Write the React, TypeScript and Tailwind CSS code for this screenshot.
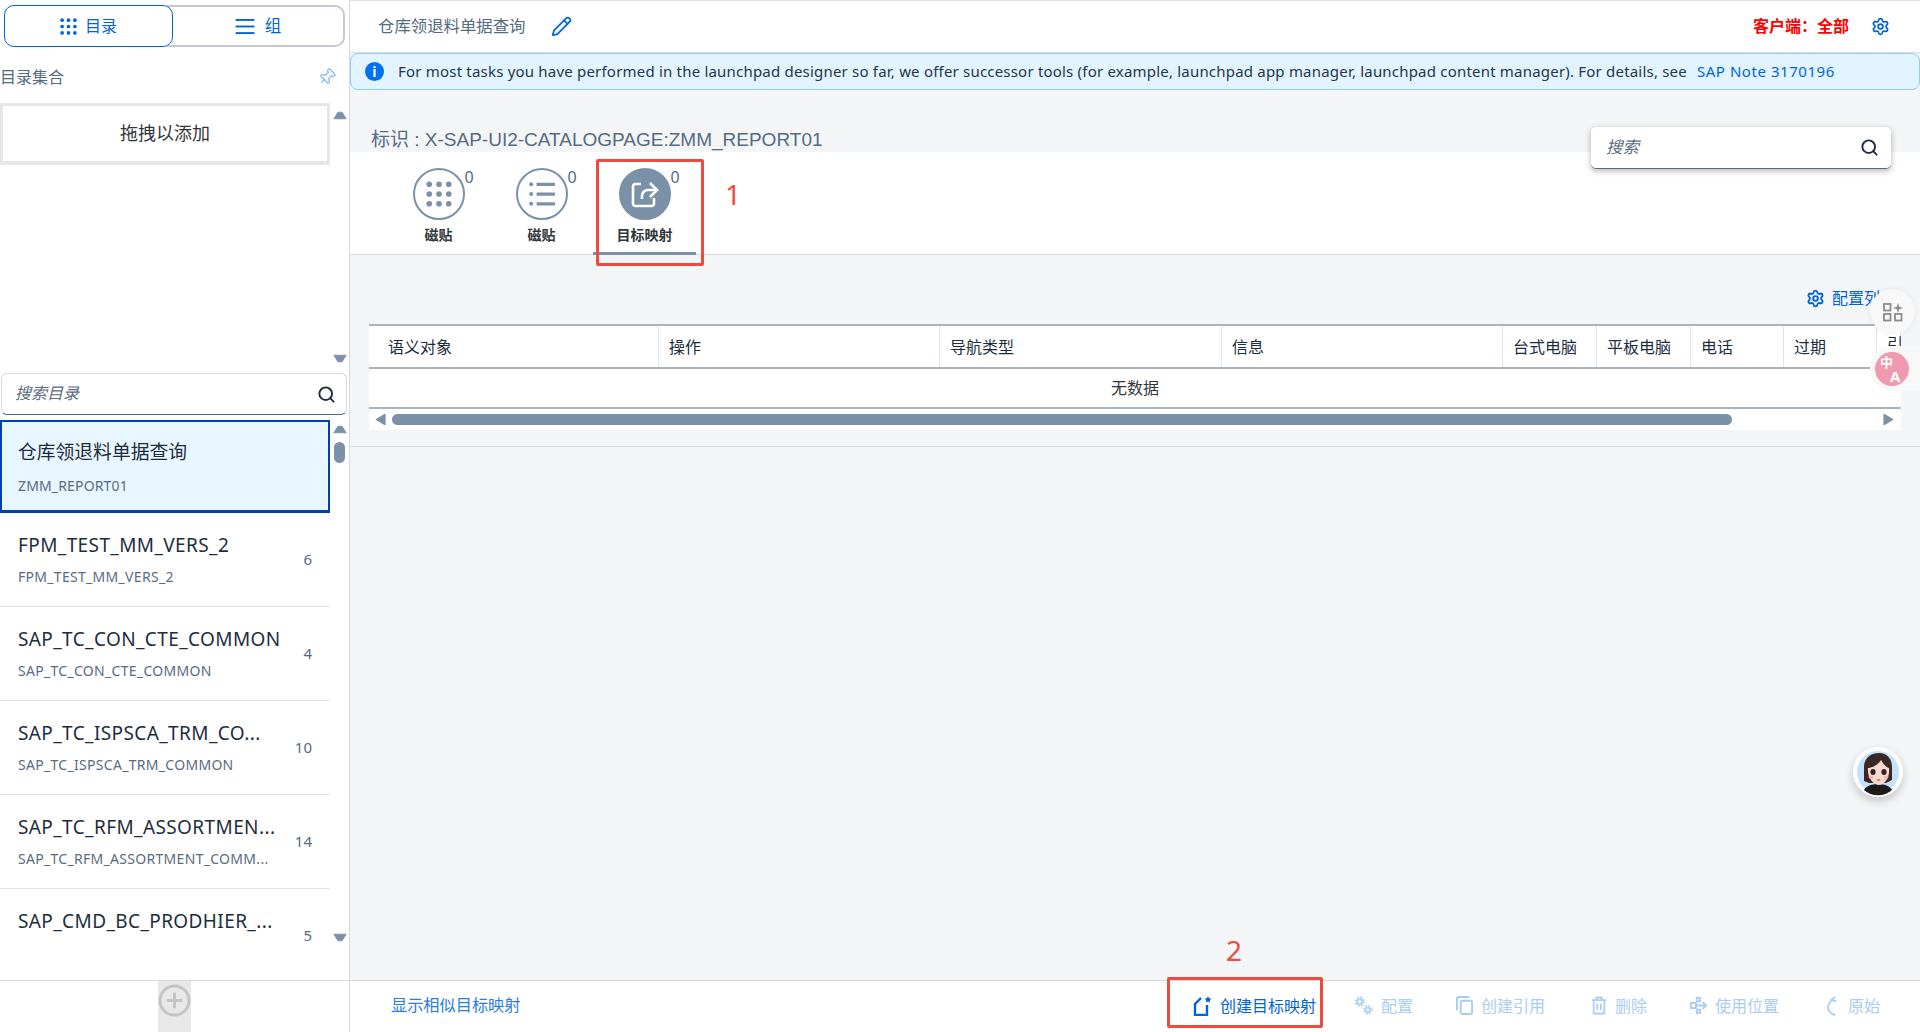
import React from 'react';
import { Pencil, Pin, Search, Settings } from 'lucide-react';

const catalogs = [
  { title: 'FPM_TEST_MM_VERS_2', sub: 'FPM_TEST_MM_VERS_2', count: 6 },
  { title: 'SAP_TC_CON_CTE_COMMON', sub: 'SAP_TC_CON_CTE_COMMON', count: 4 },
  { title: 'SAP_TC_ISPSCA_TRM_CO...', sub: 'SAP_TC_ISPSCA_TRM_COMMON', count: 10 },
  { title: 'SAP_TC_RFM_ASSORTMEN...', sub: 'SAP_TC_RFM_ASSORTMENT_COMM...', count: 14 },
  { title: 'SAP_CMD_BC_PRODHIER_...', sub: '', count: 5 },
];

const columns = ['语义对象', '操作', '导航类型', '信息', '台式电脑', '平板电脑', '电话', '过期', '引'];

const Triangle = ({ dir, className = '' }: { dir: 'up' | 'down' | 'left' | 'right'; className?: string }) => {
  const points = {
    up: '1,9 6,1 11,1 16,9',
    down: '1,1 16,1 11,9 6,9',
    left: '11,0 11,12 1,6',
    right: '1,0 1,12 11,6',
  }[dir];
  const box = dir === 'up' || dir === 'down' ? '0 0 17 10' : '0 0 12 12';
  return (
    <svg viewBox={box} className={className}>
      <polygon points={points} fill="#7b91a8" stroke="#7b91a8" strokeLinejoin="round" />
    </svg>
  );
};

const DotsIcon = ({ className = '', color = '#7b91a8' }: { className?: string; color?: string }) => (
  <svg viewBox="0 0 24 24" className={className} fill={color}>
    {[3, 12, 21].map((y) =>
      [3, 12, 21].map((x) => <circle key={`${x}-${y}`} cx={x} cy={y} r="2.6" />)
    )}
  </svg>
);

const ListIcon = ({ className = '', color = '#7b91a8' }: { className?: string; color?: string }) => (
  <svg viewBox="0 0 24 24" className={className} fill={color}>
    {[3, 12, 21].map((y) => (
      <React.Fragment key={y}>
        <circle cx="2" cy={y} r="1.8" />
        <rect x="7" y={y - 1.5} width="17" height="3" rx="0.5" />
      </React.Fragment>
    ))}
  </svg>
);

const MappingIcon = () => (
  <svg viewBox="0 0 28 28" className="w-[28px] h-[28px]" fill="none" stroke="#fff" strokeWidth="2.6">
    <path d="M10 4H4.5A2.5 2.5 0 0 0 2 6.5v17A2.5 2.5 0 0 0 4.5 26h16a2.5 2.5 0 0 0 2.5-2.5V18" />
    <path d="M11 19v-3a6 6 0 0 1 6-6h8" />
    <path d="M19 3l7 7-7 7" />
  </svg>
);

const CircleTab = ({ label, active, children }: { label: string; active?: boolean; children: React.ReactNode }) => (
  <div className={`w-[103px] h-[103px] pt-[16px] flex flex-col items-center border-b-[3px] ${active ? 'border-[#7b91a8]' : 'border-transparent'}`}>
    <div className="relative">
      <div className={`w-[52px] h-[52px] rounded-full border-2 border-[#7b91a8] flex items-center justify-center ${active ? 'bg-[#7b91a8]' : 'bg-white'}`}>
        {children}
      </div>
      <span className="absolute left-[52px] top-0 text-[16px] leading-[18px] text-[#556b82]">0</span>
    </div>
    <div className="mt-[5px] text-[14px] leading-[20px] font-semibold text-[#32363a]">{label}</div>
  </div>
);

const FooterAction = ({ label, icon, className = '' }: { label: string; icon: React.ReactNode; className?: string }) => (
  <div className={`flex items-center gap-[8px] text-[16px] text-[#a9cdf5] ${className}`}>
    {icon}
    <span>{label}</span>
  </div>
);

const CatalogRow = ({ title, sub, count }: { title: string; sub: string; count: number }) => (
  <div className="relative h-[94px] pt-[20px] pl-[18px] border-b border-[#e4e4e4]">
    <div className="text-[19px] leading-[24px] tracking-[0.4px] text-[#1d2d3e] whitespace-nowrap">{title}</div>
    {sub && <div className="mt-[10px] text-[14px] leading-[20px] tracking-[0.3px] text-[#5b6b80] whitespace-nowrap">{sub}</div>}
    <span className="absolute right-[18px] top-[36px] text-[15px] leading-[20px] text-[#556b82]">{count}</span>
  </div>
);

const Avatar = () => (
  <svg viewBox="0 0 50 50" className="w-[50px] h-[50px]">
    <circle cx="25" cy="25" r="25" fill="#fff" />
    <circle cx="25" cy="25" r="21" fill="#c6e1fc" />
    <path d="M11 34V20C11 11 18 6 26 6c8 0 13 6 13 14v13l-6 3H16z" fill="#3a2825" />
    <path d="M11 43c2-4 8-6 14-6s12 2 14 6a21 21 0 0 1-28 0z" fill="#1d1a1a" />
    <path d="M15 21c4 0 10-3 13-8 2 4 5 7 8 8 1 9-4 17-10 17S14 30 15 21z" fill="#f7d8cd" />
    <ellipse cx="20" cy="25" rx="2.6" ry="2.9" fill="#2f2524" />
    <ellipse cx="31" cy="25" rx="2.6" ry="2.9" fill="#2f2524" />
    <ellipse cx="18" cy="30" rx="2.5" ry="1.5" fill="#f3b7ae" />
    <ellipse cx="33" cy="30" rx="2.5" ry="1.5" fill="#f3b7ae" />
    <ellipse cx="25.5" cy="33" rx="2" ry="1" fill="#d9777a" />
  </svg>
);

export default function App() {
  return (
    <div className="w-[1920px] h-[1032px] flex overflow-hidden bg-white font-['Noto_Sans','Noto_Sans_CJK_SC',sans-serif]">
      {/* Left catalog panel */}
      <aside className="w-[350px] shrink-0 border-r border-[#d9d9d9] flex flex-col">
        <div className="pt-[5px] pl-[4px] flex">
          <div className="w-[169px] h-[42px] rounded-[10px] border border-[#0064d9] flex items-center justify-center gap-[8px] text-[16px] text-[#0064d9] bg-white z-10">
            <DotsIcon className="w-[17px] h-[17px]" color="#0064d9" />
            目录
          </div>
          <div className="-ml-[6px] w-[178px] h-[42px] rounded-r-[10px] border-2 border-l-0 border-[#c4c9d3] flex items-center justify-center gap-[10px] pl-[6px] text-[16.5px] text-[#0064d9]">
            <svg viewBox="0 0 20 16" className="w-[20px] h-[15px]" fill="#0064d9">
              <rect width="20" height="2" />
              <rect y="7" width="20" height="2" />
              <rect y="14" width="20" height="2" />
            </svg>
            组
          </div>
        </div>
        <div className="h-[56px] pt-[4px] flex items-center justify-between pr-[13px] text-[16px] text-[#556b82]">
          <span>目录集合</span>
          <Pin className="w-[18px] h-[18px] rotate-45 text-[#8fc0f2]" />
        </div>
        <div className="h-[262px] flex shrink-0">
          <div className="w-[330px] h-[62px] border-[3px] border-[#e6e6e6] border-b-[4px] flex items-center justify-center text-[18px] text-[#32363a]">
            拖拽以添加
          </div>
          <div className="flex-1 flex flex-col items-center justify-between pt-[8px] pb-[2px]">
            <Triangle dir="up" className="w-[14px] h-[9px]" />
            <Triangle dir="down" className="w-[14px] h-[9px]" />
          </div>
        </div>
        <div className="mt-[8px] ml-[1px] w-[346px] h-[42px] rounded-[6px] border border-[#d5dadd] border-b-[#556b82] flex items-center justify-between pl-[13px] pr-[10px] shrink-0">
          <span className="text-[16px] italic text-[#5b6b80] pb-[2px]">搜索目录</span>
          <Search className="w-[19px] h-[19px] text-[#1d2d3e]" strokeWidth={2.4} />
        </div>
        <div className="mt-[5px] flex h-[560px] overflow-hidden">
          <div className="w-[330px] shrink-0">
            <div className="h-[93px] pt-[18px] pl-[16px] bg-[#e8f6ff] border-[2px] border-[#0040b0] border-b-[3px]">
              <div className="text-[18.8px] leading-[24px] text-[#1d2d3e]">仓库领退料单据查询</div>
              <div className="mt-[12px] text-[14px] leading-[20px] tracking-[0.15px] text-[#5b6b80]">ZMM_REPORT01</div>
            </div>
            {catalogs.map((item) => (
              <CatalogRow key={item.title} {...item} />
            ))}
          </div>
          <div className="flex-1 flex flex-col items-center pt-[5px] pb-[38px]">
            <Triangle dir="up" className="w-[14px] h-[9px]" />
            <div className="mt-[8px] w-[11px] h-[21px] rounded-full bg-[#7b91a8]" />
            <Triangle dir="down" className="w-[14px] h-[9px] mt-auto" />
          </div>
        </div>
        <div className="h-[52px] border-t border-[#d9d9d9] flex justify-center shrink-0">
          <div className="w-[33px] h-full bg-[#e8e8e8] pt-[3px]">
            <svg viewBox="0 0 34 34" className="w-[33px] h-[33px]" fill="none" stroke="#c4c4c4" strokeWidth="3">
              <circle cx="17" cy="17" r="15" />
              <path d="M17 9v16M9 17h16" />
            </svg>
          </div>
        </div>
      </aside>

      {/* Right detail */}
      <main className="flex-1 min-w-0 flex flex-col relative bg-[#f4f5f7]">
        <header className="h-[53px] shrink-0 bg-white border-t border-b border-[#e0e0e0] flex items-center pl-[28px] pr-[30px]">
          <span className="text-[16.4px] text-[#556b82] pb-[1px]">仓库领退料单据查询</span>
          <Pencil className="ml-[25px] w-[21px] h-[21px] text-[#0064d9]" />
          <span className="ml-auto text-[16px] font-bold text-[#ff0000] pb-[1px]">客户端：全部</span>
          <Settings className="ml-[22px] w-[19px] h-[19px] text-[#0064d9]" strokeWidth={2.2} />
        </header>

        <div className="h-[37px] shrink-0 rounded-[8px] border border-[#8ad0fb] bg-[#e1f4ff] flex items-center pl-[14px] text-[15px] tracking-[0.2px] text-[#27364a] whitespace-nowrap">
          <div className="w-[19px] h-[19px] rounded-full bg-[#0070f2] text-white flex items-center justify-center text-[14px] font-bold leading-none">i</div>
          <span className="ml-[14px]">
            For most tasks you have performed in the launchpad designer so far, we offer successor tools (for example, launchpad app manager, launchpad content manager). For details, see
          </span>
          <span className="ml-[10px] tracking-[0.55px] text-[#0064d9]">SAP Note 3170196</span>
        </div>

        <div className="h-[62px] shrink-0 pt-[38px] pl-[21px] text-[19px] leading-[24px] text-[#556b82] overflow-hidden font-['Liberation_Sans','Noto_Sans_CJK_SC',sans-serif]">
          标识 : X-SAP-UI2-CATALOGPAGE:ZMM_REPORT01
        </div>

        <div className="h-[103px] shrink-0 bg-white border-b border-[#d9d9d9] pl-[37px] flex">
          <CircleTab label="磁贴">
            <DotsIcon className="w-[26px] h-[26px]" />
          </CircleTab>
          <CircleTab label="磁贴">
            <ListIcon className="w-[26px] h-[26px]" />
          </CircleTab>
          <CircleTab label="目标映射" active>
            <MappingIcon />
          </CircleTab>
        </div>

        <div className="h-[192px] shrink-0 border-b border-[#d9d9d9] pl-[19px]">
          <div className="h-[69px] w-[1532px] pr-[21px] flex items-center justify-end gap-[7px] text-[16px] text-[#0064d9] pt-[17px]">
            <Settings className="w-[19px] h-[19px]" strokeWidth={2.4} />
            配置列
          </div>
          <div className="w-[1532px] overflow-hidden bg-white border-t-2 border-[#a9b4be]">
            <div className="h-[43px] grid grid-cols-[290px_281px_282px_281px_94px_94px_93px_93px_24px] border-b-2 border-[#a9b4be]">
              {columns.map((col, i) => (
                <div key={col} className={`flex items-center border-r border-[#e1e4e8] ${i === 0 ? 'pl-[19px]' : 'pl-[10px]'}`}>
                  <span className={`text-[16px] leading-[16px] text-[#1d2d3e] whitespace-nowrap ${i === 8 ? 'pb-[6px]' : ''}`}>{col}</span>
                </div>
              ))}
            </div>
            <div className="h-[40px] flex items-center justify-center text-[16px] text-[#32363a] border-b-2 border-[#a9b4be]">
              无数据
            </div>
            <div className="h-[21px] flex items-center pl-[6px] pr-[7px]">
              <Triangle dir="left" className="w-[11px] h-[11px]" />
              <div className="ml-[6px] w-[1340px] h-[11px] rounded-full bg-[#7b91a8]" />
              <Triangle dir="right" className="w-[11px] h-[11px] ml-auto" />
            </div>
          </div>
        </div>

        <div className="flex-1" />

        <footer className="h-[52px] shrink-0 bg-white border-t border-[#d9d9d9] flex items-center pb-[2px] pl-[41px] pr-[40px]">
          <span className="text-[16.2px] text-[#2b7ce0]">显示相似目标映射</span>
          <div className="ml-auto flex items-center gap-[8px] text-[16px] text-[#0064d9]">
            <svg viewBox="0 0 20 20" className="w-[20px] h-[20px]" fill="none" stroke="#0064d9" strokeWidth="2.4">
              <path d="M9 2 3 8v11h12V9" />
              <path d="M16 0l1 2.2 2.4.3-1.7 1.7.4 2.4-2.1-1.1-2.1 1.1.4-2.4-1.7-1.7 2.4-.3z" fill="#0064d9" stroke="none" />
            </svg>
            创建目标映射
          </div>
          <FooterAction
            label="配置"
            className="ml-[38px]"
            icon={
              <svg viewBox="0 0 20 20" className="w-[19px] h-[19px]" fill="none" stroke="#a9cdf5">
                <circle cx="6" cy="6" r="2.6" strokeWidth="1.6" />
                <circle cx="6" cy="6" r="4.4" strokeWidth="2" strokeDasharray="1.9 1.55" />
                <circle cx="14.5" cy="14.5" r="2.2" strokeWidth="1.6" />
                <circle cx="14.5" cy="14.5" r="4" strokeWidth="2" strokeDasharray="1.7 1.44" />
              </svg>
            }
          />
          <FooterAction
            label="创建引用"
            className="ml-[43px]"
            icon={
              <svg viewBox="0 0 18 20" className="w-[17px] h-[19px]" fill="none" stroke="#a9cdf5" strokeWidth="2">
                <path d="M1 15V3a2 2 0 0 1 2-2h11" />
                <rect x="5" y="5" width="12" height="14" rx="1.5" />
              </svg>
            }
          />
          <FooterAction
            label="删除"
            className="ml-[46px]"
            icon={
              <svg viewBox="0 0 18 20" className="w-[16px] h-[19px]" fill="none" stroke="#a9cdf5" strokeWidth="2">
                <path d="M1 4h16M6 4V1h6v3M3 4v15h12V4M7 8v7M11 8v7" />
              </svg>
            }
          />
          <FooterAction
            label="使用位置"
            className="ml-[43px]"
            icon={
              <svg viewBox="0 0 20 20" className="w-[17px] h-[17px]" fill="none" stroke="#a9cdf5" strokeWidth="2.2">
                <rect x="1" y="7" width="6" height="6" />
                <rect x="8" y="1" width="4" height="4" />
                <rect x="8" y="15" width="4" height="4" />
                <path d="M7 10h12M15 6l4 4-4 4" />
              </svg>
            }
          />
          <FooterAction
            label="原始"
            className="ml-[48px]"
            icon={
              <svg viewBox="0 0 14 22" className="w-[13px] h-[20px]" fill="none" stroke="#a9cdf5" strokeWidth="2">
                <path d="M9 1 5 4l5 2" />
                <path d="M6 4C2 7 1 10 1 13c0 3 3 7 8 8" />
              </svg>
            }
          />
        </footer>

        {/* Search over the tab bar */}
        <div className="absolute left-[1241px] top-[127px] w-[300px] h-[42px] rounded-[5px] bg-white border-b border-[#556b82] shadow-[0_2px_6px_rgba(0,0,0,0.3)] flex items-center justify-between pl-[15px] pr-[12px]">
          <span className="text-[16.5px] italic text-[#5b6b80] pb-[1px]">搜索</span>
          <Search className="w-[19px] h-[19px] text-[#1d2d3e]" strokeWidth={2.4} />
        </div>

        {/* Annotations */}
        <div className="absolute left-[246px] top-[159px] w-[108px] h-[107px] border-[3px] border-[#ee4b3e] rounded-[2px]" />
        <span className="absolute left-[375px] top-[176px] text-[28px] leading-[36px] text-[#ee4b3e]">1</span>
        <div className="absolute left-[817px] top-[977px] w-[156px] h-[51px] border-[3px] border-[#ee4b3e] rounded-[2px]" />
        <span className="absolute left-[876px] top-[932px] text-[28px] leading-[36px] text-[#ee4b3e]">2</span>

        {/* Floating widgets */}
        <div className="absolute left-[1520px] top-[289px] w-[45px] h-[45px] rounded-full bg-[#f8f8f8] flex items-center justify-center shadow-[0_0_6px_rgba(0,0,0,0.06)]">
          <svg viewBox="0 0 20 20" className="w-[20px] h-[20px]" fill="none" stroke="#8c8c8c" strokeWidth="1.8">
            <rect x="1" y="2" width="6.5" height="6.5" />
            <rect x="1" y="12" width="6.5" height="6.5" />
            <rect x="12" y="12" width="6.5" height="6.5" />
            <path d="M15 1l1.2 3.8L20 6l-3.8 1.2L15 11l-1.2-3.8L10 6l3.8-1.2z" fill="#8c8c8c" stroke="none" />
          </svg>
        </div>
        <div className="absolute left-[1520px] top-[346px] w-[50px] h-[45px] rounded-l-full bg-[#f8f8f8] flex items-center pl-[5px]">
          <div className="relative w-[34px] h-[34px] rounded-full bg-[#f09ab0] text-white font-bold">
            <span className="absolute left-[5px] top-[4px] text-[13px] leading-[13px]">中</span>
            <span className="absolute left-[15px] top-[17px] text-[15px] leading-[15px]">A</span>
          </div>
        </div>
        <div className="absolute left-[1503px] top-[747px] rounded-full shadow-[0_4px_10px_rgba(0,0,0,0.2)]">
          <Avatar />
        </div>
      </main>
    </div>
  );
}
